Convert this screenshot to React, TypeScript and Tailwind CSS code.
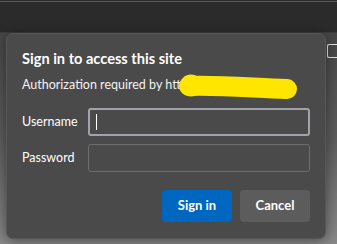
export default function App() {
  return (
    <div
      className="w-[337px] h-[244px] overflow-hidden bg-[#2b2b2b] text-white"
      style={{ fontFamily: 'Lato, "Noto Sans", sans-serif' }}
    >
      {/* browser chrome */}
      <div className="h-px bg-[#2b2b2b]" />
      <div className="h-px bg-[#5a5a5a]" />
      <div className="h-[30px] bg-[#2b2b2b]" />
      <div className="h-px bg-[#3d3d3d]" />

      {/* dimmed page behind the dialog */}
      <div className="flex h-[211px] bg-gradient-to-b from-[#474747] via-[#5e5e5e] to-[#8a8a8a] pl-[6px]">
        <div className="relative flex h-[206px] w-[320px] shrink-0 flex-col rounded-[7px] border border-[#575757] bg-[#4a4a4a] px-[15px] pt-[15px] shadow-[0_2px_14px_rgba(0,0,0,0.45)]">
          <div className="text-[14.6px] font-bold leading-[20px]">Sign in to access this site</div>
          <div className="mt-[7px] text-[12.5px] leading-[18px] text-[#f2f2f2]">Authorization required by http</div>

          {/* redaction scribble */}
          <svg className="absolute left-[167px] top-[36px]" width="135" height="34" viewBox="0 0 135 34">
            <path d="M15 16 C45 15 80 18 113 19" stroke="#ffe600" strokeWidth="20" strokeLinecap="round" fill="none" />
            <circle cx="17" cy="15.5" r="11" fill="#ffe600" />
          </svg>

          <div className="mt-[14px] flex items-center">
            <div className="w-[66px] text-[12.5px] leading-[18px]">Username</div>
            <div className="flex h-[28px] flex-1 items-center rounded-[3px] border-2 border-[#a0a4a8] bg-[#4a4a4a] pl-[6px]">
              <div className="h-[16px] w-px bg-white" />
            </div>
          </div>
          <div className="mt-[8px] flex items-center">
            <div className="w-[66px] text-[12.5px] leading-[18px]">Password</div>
            <div className="h-[28px] flex-1 rounded-[3px] border border-[#6e6e6e] bg-[#4a4a4a]" />
          </div>

          <div className="mt-[18px] flex justify-end gap-[8px]">
            <button className="h-[32px] w-[70px] rounded-[4px] bg-[#0067c0] text-[13px] font-bold text-white">
              Sign in
            </button>
            <button className="h-[32px] w-[70px] rounded-[4px] bg-[#5c5c5c] text-[13px] font-bold text-white">
              Cancel
            </button>
          </div>
        </div>

        <div className="ml-px mt-[11px] h-[14px] w-[14px] shrink-0 rounded-[2px] border border-[#e8e8e8] border-r-0" />
      </div>
    </div>
  );
}
